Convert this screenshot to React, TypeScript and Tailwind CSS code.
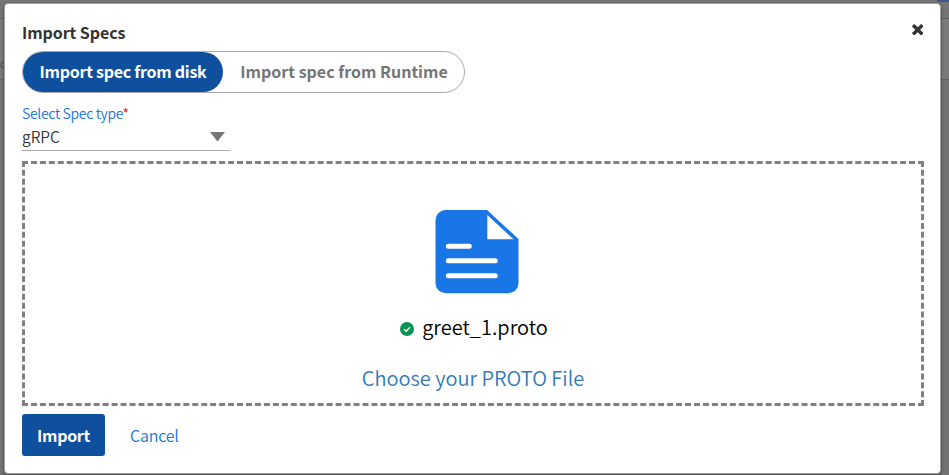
function PageBehind() {
  return (
    <div className="flex h-full flex-col bg-[#737373]">
      <div className="flex h-[19px] shrink-0 items-start justify-end border-b border-[#5f5f5f] bg-[#757575]">
        <div className="h-[2px] w-[12px] rounded-bl-sm bg-[#3a5a8c]" />
      </div>
      <div className="flex h-[61px] shrink-0 items-end border-b border-[#646464] bg-[#7a7a7a] pb-[5px]">
        <span className="text-[10px] leading-[20px] text-[#454545]">ca</span>
      </div>
    </div>
  );
}

function FileIcon() {
  return (
    <svg width="84" height="84" viewBox="0 0 84 84" className="block">
      <path d="M10.500 0H52L83.500 29V73.300a10 10 0 0 1-10 10H10.500a10 10 0 0 1-10-10V10a10 10 0 0 1 10-10Z" fill="#1976e6" />
      <path d="M52.300 5V29.300H78.500Z" fill="#fff" />
      <path d="M13.300 36.300H34.300M13.300 50.700H60.300M13.300 65.700H60.300" stroke="#fff" strokeWidth="5" strokeLinecap="round" />
    </svg>
  );
}

export default function App() {
  return (
    <div className="relative h-[475px] w-[949px] overflow-hidden font-['Noto_Sans_CJK_JP','Noto_Sans_CJK_SC',sans-serif]">
      <PageBehind />
      <section
        role="dialog"
        className="absolute left-[4px] top-[3px] flex h-[471px] w-[937px] flex-col rounded-[4px] border border-[#a0a0a0] bg-white pl-[17px] pr-[16px] shadow-[0_1px_3px_rgba(0,0,0,0.5)]"
      >
        <header className="flex h-[47px] shrink-0 justify-between">
          <h1 className="mt-[16px] h-[24px] whitespace-nowrap text-[16px] font-bold leading-[24px] tracking-[-0.08px] text-[#333]">Import Specs</h1>
          <button aria-label="Close" className="mr-[1px] mt-[20px] h-[11px] w-[11px]">
            <svg width="11" height="11" viewBox="0 0 11 11" className="block">
              <path d="M2.300 2.300 9.200 9.200M9.200 2.300 2.300 9.200" stroke="#333" strokeWidth="3.400" strokeLinecap="square" strokeLinejoin="round" />
            </svg>
          </button>
        </header>

        <div className="flex h-[42px] w-[443px] shrink-0 rounded-full border border-[#aaa]">
          <button className="h-[40px] w-[200px] whitespace-nowrap rounded-full bg-[#0f509e] pb-[2px] text-[16px] font-bold leading-[38px] tracking-[-0.27px] text-white">
            Import spec from disk
          </button>
          <button className="ml-[1px] h-[40px] w-[240px] whitespace-nowrap pb-[2px] text-[16px] font-bold leading-[38px] text-[#757575]">
            Import spec from Runtime
          </button>
        </div>

        <label className="mt-[10px] h-[21px] shrink-0 whitespace-nowrap text-[14px] font-[350] leading-[20px] tracking-[-0.32px] text-[#1a73e0]">
          Select Spec type<span className="text-[#f00]">*</span>
        </label>
        <div className="flex h-[27px] w-[208px] shrink-0 justify-between border-b border-[#aaa]">
          <span className="text-[15.500px] font-[350] leading-[24px] text-[#333]">gRPC</span>
          <svg width="16" height="10" viewBox="0 0 16 10" className="mr-[4px] mt-[8px]">
            <path d="M0 0h15L7.500 9.500Z" fill="#757575" />
          </svg>
        </div>

        <main className="mt-[10px] flex h-[245px] w-[902px] shrink-0 flex-col items-center border-[3px] border-dashed border-[#808080] pt-[46px]">
          <div className="ml-[8px]"><FileIcon /></div>
          <div className="ml-[2px] mt-[18px] flex h-[30px] items-center gap-[8px]">
            <svg width="14" height="14" viewBox="0 0 14 14" className="mt-[3px]">
              <circle cx="7" cy="7" r="7" fill="#099250" />
              <path d="m4.100 7.200 2 2 3.900-4" fill="none" stroke="#fff" strokeWidth="1.400" />
            </svg>
            <span className="whitespace-nowrap text-[20px] font-[350] leading-[30px] text-black">greet_1.proto</span>
          </div>
          <button className="mt-[21px] h-[30px] whitespace-nowrap text-[20px] font-[350] leading-[30px] text-[#337ab7]">Choose your PROTO File</button>
        </main>

        <footer className="mt-[8px] flex h-[42px] shrink-0">
          <button className="h-[42px] w-[83px] rounded-[3px] bg-[#0f509e] text-[16px] font-bold leading-[42px] tracking-[-0.3px] text-white">Import</button>
          <button className="ml-[25px] text-[16px] font-[350] leading-[42px] tracking-[-0.2px] text-[#1a73e0]">Cancel</button>
        </footer>
      </section>
    </div>
  );
}
